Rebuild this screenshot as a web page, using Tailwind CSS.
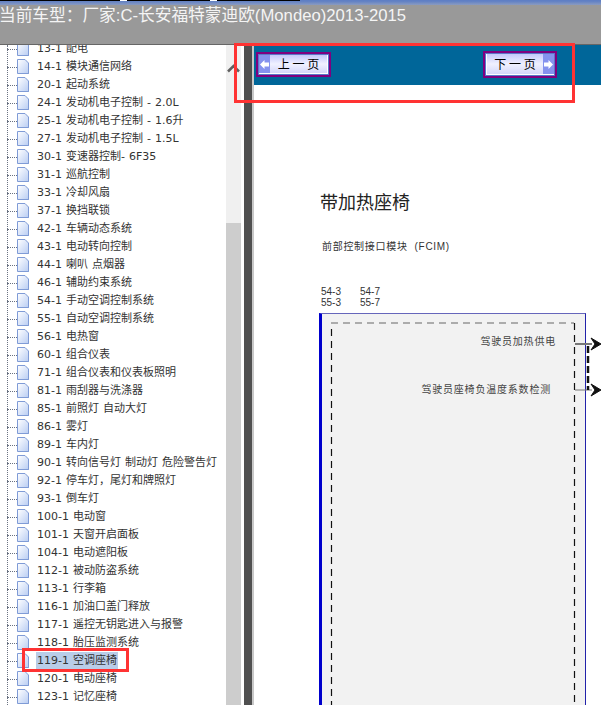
<!DOCTYPE html>
<html lang="en">
<head>
    <meta charset="UTF-8">
    <title>当前车型</title>
    <script src="https://cdn.jsdelivr.net/npm/@tailwindcss/browser@4"></script>
</head>
<body class="relative w-[601px] h-[705px] overflow-hidden bg-white font-['DejaVu_Sans','Noto_Sans_CJK_SC',sans-serif]">
    <!-- Header -->
    <header class="h-[45px] bg-[#999999] border-b border-b-[#666666] overflow-hidden">
        <div class="flex h-[1px] bg-[#5f7fc4]">
            <span class="w-[120px] bg-black"></span><span class="w-[7px] bg-white"></span>
            <span class="w-[83px] bg-black"></span><span class="w-[7px] bg-white"></span>
            <span class="w-[83px] bg-black"></span>
        </div>
        <div class="h-[4px] bg-gradient-to-b from-[#5f7fc4] to-[#8a9bc0]"></div>
        <div class="-ml-[1px] -mt-[1px] whitespace-nowrap text-[16.7px] leading-[24px] text-[#f4f4f4] font-['Liberation_Sans','Noto_Sans_CJK_SC',sans-serif]">当前车型：厂家:C-长安福特蒙迪欧(Mondeo)2013-2015</div>
    </header>

    <svg class="absolute w-0 h-0"><defs><linearGradient id="doc" x1="0" y1="0" x2="1" y2="1"><stop offset="0" stop-color="#ffffff"/><stop offset="1" stop-color="#b9cdf3"/></linearGradient></defs></svg>

    <div class="flex h-[660px]">
        <!-- Tree -->
        <aside class="relative w-[226px] shrink-0 overflow-hidden text-[11px] leading-[18px] text-[#333333]">
            <div class="absolute left-[7px] top-0 bottom-0 border-l border-dotted border-gray-500"></div>
            <ul id="tree" class="-mt-[5px] [word-spacing:0.5px]"></ul>
        </aside>

        <!-- Scrollbar -->
        <div class="relative w-[15px] shrink-0 bg-[#f0f0f0]">
            <svg class="absolute left-[1px] top-[18px] w-[13px] h-[10px]" viewBox="0 0 13 10"><path d="M1 8.5L6.5 3L12 8.5" fill="none" stroke="#606060" stroke-width="2.5"/></svg>
            <div class="absolute left-0 right-0 top-[178px] bottom-0 bg-[#cdcdcd]"></div>
        </div>
        <div class="w-[3px] shrink-0 bg-white"></div>
        <div class="w-[8px] shrink-0 bg-[#505050]"></div>
        <div class="w-[2px] shrink-0 bg-[#c8c8c8]"></div>

        <!-- Main -->
        <main class="flex-1 min-w-0">
            <div class="h-[40px] bg-[#006699] relative">
                <button class="absolute left-[2px] top-[7px] flex h-[25px] w-[75px] border-2 border-[#800080] bg-[#5a78c8] p-[1px]">
                    <span class="flex flex-1 items-stretch border-b border-r border-white bg-gradient-to-b from-[#c4c8fb] via-[#f0f1ff] to-[#d4d7fa] text-[12px] leading-none text-black">
                        <span class="flex w-[11px] items-center justify-center bg-[#8592ee]"><svg class="w-[9px] h-[9px]" viewBox="0 0 9 9"><path d="M0 4.5L4.5 0V2.5H9V6.5H4.5V9Z" fill="#ffffff"/></svg></span>
                        <span class="flex-1 self-center text-center font-['Noto_Sans_CJK_SC',sans-serif]">上 一 页</span>
                    </span>
                </button>
                <button class="absolute left-[229px] top-[6px] flex h-[27px] w-[74px] border-2 border-[#800080] bg-[#5a78c8] p-[1px]">
                    <span class="flex flex-1 items-stretch border-b border-l border-white bg-gradient-to-b from-[#c4c8fb] via-[#f0f1ff] to-[#d4d7fa] text-[12px] leading-none text-black">
                        <span class="flex-1 self-center text-center font-['Noto_Sans_CJK_SC',sans-serif]">下 一 页</span>
                        <span class="flex w-[11px] items-center justify-center bg-[#8592ee]"><svg class="w-[9px] h-[9px]" viewBox="0 0 9 9"><path d="M9 4.5L4.5 0V2.5H0V6.5H4.5V9Z" fill="#ffffff"/></svg></span>
                    </span>
                </button>
            </div>

            <div class="pl-[65px] pt-[104px] text-[#333333]">
                <h1 class="ml-[1px] text-[18px] leading-[24px] font-normal text-[#222222] font-['Noto_Sans_CJK_SC',sans-serif]">带加热座椅</h1>
                <p class="mt-[27px] ml-[3px] text-[10px] leading-[14px] tracking-[0.7px] font-['Liberation_Sans','Noto_Sans_CJK_SC',sans-serif]">前部控制接口模块&nbsp;&nbsp;(FCIM)</p>
                <div class="mt-[32px] ml-[2px] grid grid-cols-[39px_39px] text-[10px] leading-[11px] font-['Liberation_Sans',sans-serif]">
                    <span>54-3</span><span>54-7</span>
                    <span>55-3</span><span>55-7</span>
                </div>

                <!-- Diagram -->
                <div class="relative mt-[5px] h-[400px] w-[267px] bg-[#f2f2f2] border-t border-t-[#6666bb] border-r border-r-[#2222aa] border-l-[3px] border-l-[#0000cc]">
                    <svg class="absolute -left-[3px] -top-[1px] w-[290px] h-[400px] overflow-visible" viewBox="0 0 290 400" fill="none">
                        <path d="M12 10H255" stroke="#666666" stroke-dasharray="7 5"/>
                        <path d="M12.5 16V400M255.5 10V400" stroke="#111111" stroke-width="1.2" stroke-dasharray="7 5"/>
                        <path d="M256 31H273" stroke="#777777" stroke-width="2"/>
                        <path d="M256 77H273" stroke="#777777"/>
                        <path d="M269 33V77" stroke="#111111" stroke-width="2.5" stroke-dasharray="7 3"/>
                        <path d="M272 25L282 31L272 37L276 31Z M272 71L282 77L272 83L276 77Z" fill="#111111" stroke="#111111"/>
                    </svg>
                    <span class="absolute right-[29px] top-[21px] whitespace-nowrap text-[10px] leading-[14px] tracking-[0.8px] text-[#444444]">驾驶员加热供电</span>
                    <span class="absolute right-[34px] top-[69px] whitespace-nowrap text-[10px] leading-[14px] tracking-[0.8px] text-[#444444]">驾驶员座椅负温度系数检测</span>
                </div>
            </div>
        </main>
    </div>

    <!-- Red annotation boxes -->
    <div class="absolute left-[234px] top-[43px] w-[341px] h-[60px] border-[3px] border-[#ff3333]"></div>
    <div class="absolute left-[22px] top-[648px] w-[107px] h-[24px] border-[3px] border-[#ff3333]"></div>

    <script>
        var rows = ['13-1 配电','14-1 模块通信网络','20-1 起动系统','24-1 发动机电子控制 - 2.0L','25-1 发动机电子控制 - 1.6升','27-1 发动机电子控制 - 1.5L','30-1 变速器控制- 6F35','31-1 巡航控制','33-1 冷却风扇','37-1 换挡联锁','42-1 车辆动态系统','43-1 电动转向控制','44-1 喇叭 点烟器','46-1 辅助约束系统','54-1 手动空调控制系统','55-1 自动空调控制系统','56-1 电热窗','60-1 组合仪表','71-1 组合仪表和仪表板照明','81-1 雨刮器与洗涤器','85-1 前照灯 自动大灯','86-1 雾灯','89-1 车内灯','90-1 转向信号灯 制动灯 危险警告灯','92-1 停车灯，尾灯和牌照灯','93-1 倒车灯','100-1 电动窗','101-1 天窗开启面板','104-1 电动遮阳板','112-1 被动防盗系统','113-1 行李箱','116-1 加油口盖门释放','117-1 遥控无钥匙进入与报警','118-1 胎压监测系统','119-1 空调座椅','120-1 电动座椅','123-1 记忆座椅'];
        document.getElementById('tree').innerHTML = rows.map(function (r) {
            var selected = r.indexOf('119-1') === 0;
            return '<li class="flex h-[18px] items-center">'
                + '<span class="w-[10px] ml-[7px] border-t border-dotted border-gray-500"></span>'
                + '<svg class="w-[13px] h-[16px] shrink-0" viewBox="0 0 13 16"><path d="M1.5 1.5H8.5L12 5V15H1.5Z" fill="#9fb0d0"/><path d="M.5.5H8L11.5 4V14.5H.5Z" fill="url(#doc)" stroke="#7f9bd6"/></svg>'
                + '<span class="ml-[6px] whitespace-nowrap px-[1px] ' + (selected ? 'bg-[#b9cde8]' : '') + '">' + r + '</span></li>';
        }).join('');
    </script>
</body>
</html>
